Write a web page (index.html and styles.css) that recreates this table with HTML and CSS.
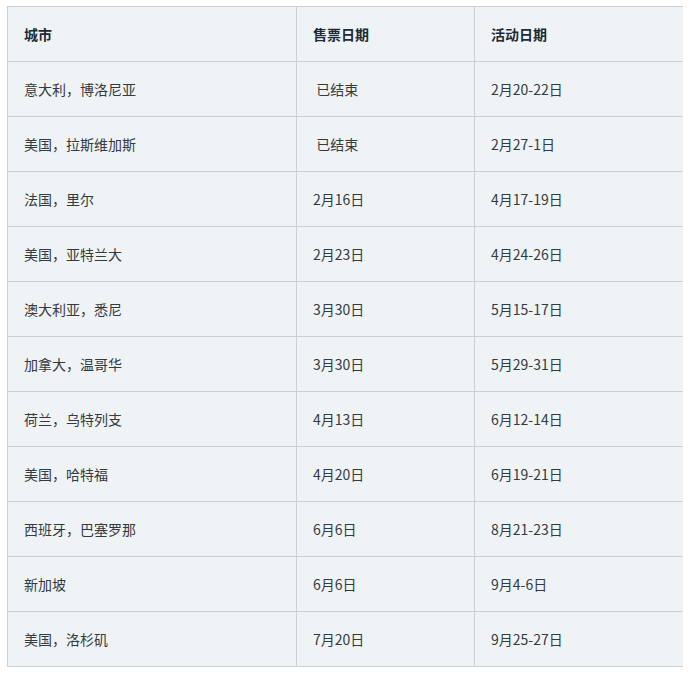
FILE: index.html
```html
<!DOCTYPE html>
<html lang="zh">
<head>
<meta charset="utf-8">
<link rel="stylesheet" href="styles.css">
</head>
<body>
<table class="events">
  <colgroup>
    <col class="c1"><col class="c2"><col class="c3">
  </colgroup>
  <thead>
    <tr><th>城市</th><th>售票日期</th><th>活动日期</th></tr>
  </thead>
  <tbody>
    <tr><td>意大利，博洛尼亚</td><td>&nbsp;已结束</td><td>2月20-22日</td></tr>
    <tr><td>美国，拉斯维加斯</td><td>&nbsp;已结束</td><td>2月27-1日</td></tr>
    <tr><td>法国，里尔</td><td>2月16日</td><td>4月17-19日</td></tr>
    <tr><td>美国，亚特兰大</td><td>2月23日</td><td>4月24-26日</td></tr>
    <tr><td>澳大利亚，悉尼</td><td>3月30日</td><td>5月15-17日</td></tr>
    <tr><td>加拿大，温哥华</td><td>3月30日</td><td>5月29-31日</td></tr>
    <tr><td>荷兰，乌特列支</td><td>4月13日</td><td>6月12-14日</td></tr>
    <tr><td>美国，哈特福</td><td>4月20日</td><td>6月19-21日</td></tr>
    <tr><td>西班牙，巴塞罗那</td><td>6月6日</td><td>8月21-23日</td></tr>
    <tr><td>新加坡</td><td>6月6日</td><td>9月4-6日</td></tr>
    <tr><td>美国，洛杉矶</td><td>7月20日</td><td>9月25-27日</td></tr>
  </tbody>
</table>
</body>
</html>
```
FILE: styles.css
```css
body {
  margin: 6px 7px;
  background: #ffffff;
  font-family: "Noto Sans CJK SC", "Noto Sans", sans-serif;
  font-size: 14px;
  color: #333a40;
}
.events {
  width: 677px;
  border-collapse: collapse;
  table-layout: fixed;
  background: #f0f3f5;
}
.c1 { width: 289px; }
.c2 { width: 178px; }
.c3 { width: 210px; }
.events th,
.events td {
  border: 1px solid #cdd0d2;
  height: 54px;
  padding: 0 16px;
  text-align: left;
  vertical-align: middle;
  line-height: 20px;
}
.events th {
  font-weight: 700;
  color: #1c2b36;
}
```
